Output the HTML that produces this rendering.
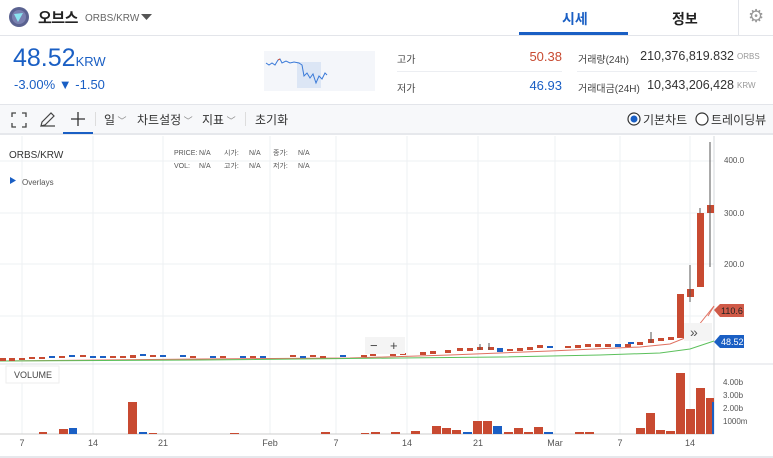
<!DOCTYPE html>
<html><head><meta charset="utf-8">
<style>
*{margin:0;padding:0;box-sizing:border-box}
body{width:773px;height:458px;overflow:hidden;background:#fff;font-family:"Liberation Sans","Noto Sans CJK KR",sans-serif;color:#333;position:relative}
.a{position:absolute;white-space:nowrap}
</style></head><body>
<div class="a" style="left:0;top:35px;width:773px;height:1px;background:#e3e5ea"></div>
<svg class="a" style="left:8px;top:6px" width="22" height="22"><circle cx="11" cy="11" r="10" fill="#5a6290"/><circle cx="11" cy="11" r="7" fill="#7a80b0"/><path d="M6 8 L15 7 L10 16 Z" fill="#8ae4f0"/></svg>
<div class="a" style="left:38px;top:7px;font-size:15px;letter-spacing:-0.5px;font-weight:bold;color:#222">오브스</div>
<div class="a" style="left:85px;top:13px;font-size:10px;color:#666">ORBS/KRW</div>
<svg class="a" style="left:141px;top:14px" width="12" height="8"><path d="M0 0H11L5.5 6Z" fill="#555"/></svg>
<div class="a" style="left:562px;top:9px;font-size:14px;font-weight:bold;color:#1a5fc4">시세</div>
<div class="a" style="left:519px;top:32px;width:109px;height:3px;background:#1a5fc4"></div>
<div class="a" style="left:672px;top:9px;font-size:14px;font-weight:bold;color:#222">정보</div>
<div class="a" style="left:738px;top:0;width:1px;height:35px;background:#e3e5ea"></div>
<div class="a" style="left:748px;top:6px;font-size:18px;color:#999">⚙</div>
<div class="a" style="left:13px;top:44px;font-size:25px;color:#1a5fc4">48.52<span style="font-size:13px">KRW</span></div>
<div class="a" style="left:14px;top:77px;font-size:13px;color:#1a5fc4">-3.00% ▼ -1.50</div>
<svg class="a" style="left:264px;top:51px" width="111" height="40"><rect width="111" height="40" fill="#f4f6fa"/><rect x="33" y="11" width="24" height="26" fill="#dce6f5"/><path d="M2 12 L5 14 L8 12 L11 14 L14 9 L16 8 L18 12 L22 10 L26 12 L30 11 L35 12 L38 14 L40 25 L43 22 L46 27 L49 23 L52 32 L55 25 L58 28 L61 22 L63 24" fill="none" stroke="#3a7ad8" stroke-width="1"/><path d="M14 9 L16 8" stroke="#d0503a"/></svg>
<div class="a" style="left:397px;top:51px;font-size:10px;color:#444">고가</div>
<div class="a" style="left:480px;top:49px;width:82px;text-align:right;font-size:13px;color:#c84a31">50.38</div>
<div class="a" style="left:397px;top:71px;width:165px;height:1px;background:#eceef2"></div>
<div class="a" style="left:397px;top:80px;font-size:10px;color:#444">저가</div>
<div class="a" style="left:480px;top:78px;width:82px;text-align:right;font-size:13px;color:#1a5fc4">46.93</div>
<div class="a" style="left:578px;top:51px;font-size:10px;color:#444">거래량(24h)</div>
<div class="a" style="left:600px;top:49px;width:134px;text-align:right;font-size:12.5px;color:#333">210,376,819.832</div>
<div class="a" style="left:737px;top:52px;font-size:8px;color:#999">ORBS</div>
<div class="a" style="left:577px;top:71px;width:180px;height:1px;background:#eceef2"></div>
<div class="a" style="left:578px;top:80px;font-size:10px;color:#444">거래대금(24H)</div>
<div class="a" style="left:600px;top:78px;width:134px;text-align:right;font-size:12.5px;color:#333">10,343,206,428</div>
<div class="a" style="left:737px;top:81px;font-size:8px;color:#999">KRW</div>
<div class="a" style="left:0;top:104px;width:773px;height:31px;background:#f7f8fa;border-top:1px solid #e3e5ea;border-bottom:2px solid #e6e8ec"></div>
<svg class="a" style="left:11px;top:112px" width="16" height="16" fill="none" stroke="#444" stroke-width="1.3"><path d="M1 5V1H5M11 1H15V5M15 11V15H11M5 15H1V11"/></svg>
<svg class="a" style="left:39px;top:111px" width="18" height="17" fill="none" stroke="#444" stroke-width="1.2"><path d="M2 15L3 11L12 2L15 5L6 14Z M2 15H16"/></svg>
<svg class="a" style="left:70px;top:111px" width="16" height="16" stroke="#333" stroke-width="1.3"><path d="M8 1V15M1 8H15"/></svg>
<div class="a" style="left:63px;top:132px;width:30px;height:2px;background:#1a5fc4"></div>
<div class="a" style="left:95px;top:112px;width:1px;height:14px;background:#ddd"></div>
<div class="a" style="left:104px;top:111px;font-size:12px;color:#333">일<span style="color:#888;font-size:9px"> ﹀</span></div>
<div class="a" style="left:137px;top:111px;font-size:12px;color:#333">차트설정<span style="color:#888;font-size:9px"> ﹀</span></div>
<div class="a" style="left:202px;top:111px;font-size:12px;color:#333">지표<span style="color:#888;font-size:9px"> ﹀</span></div>
<div class="a" style="left:245px;top:112px;width:1px;height:14px;background:#ddd"></div>
<div class="a" style="left:255px;top:111px;font-size:12px;color:#333">초기화</div>
<svg class="a" style="left:627px;top:112px" width="14" height="14"><circle cx="7" cy="7" r="6" fill="#fff" stroke="#333" stroke-width="1.2"/><circle cx="7" cy="7" r="3.5" fill="#1a5fc4"/></svg>
<div class="a" style="left:643px;top:111px;font-size:12px;color:#333">기본차트</div>
<svg class="a" style="left:695px;top:112px" width="14" height="14"><circle cx="7" cy="7" r="6" fill="#fff" stroke="#333" stroke-width="1.2"/></svg>
<div class="a" style="left:711px;top:111px;font-size:12px;color:#333">트레이딩뷰</div>
<svg class="a" style="left:0;top:136px" width="773" height="322">
<g stroke="#eef0f3" stroke-width="1">
<path d="M0 25H714M0 77H714M0 128H714M0 180H714"/>
<path d="M22 0V298M93 0V298M163 0V298M270 0V298M336 0V298M407 0V298M478 0V298M555 0V298M620 0V298M690 0V298"/>
</g>
<path d="M0 228H773" stroke="#dcdfe4"/>
<path d="M714 0V298" stroke="#d5d8dd"/>
<path d="M0 298H714" stroke="#ccc"/>
<path d="M0 321H773" stroke="#e6e8ec" stroke-width="2"/>
<path d="M0 225 L200 223 L350 222 L450 219 L550 215 L640 211 L670 208 L690 200 L714 170" fill="none" stroke="#e07060" stroke-width="1"/>
<path d="M0 225 L200 224 L400 222 L500 221 L600 219 L660 217 L690 213 L714 205" fill="none" stroke="#5cc05c" stroke-width="1"/>
<path fill="#c84a31" d="M0 222h6v3h-6zM9 222h6v3h-6zM19 222h6v2h-6zM29 221h6v2h-6zM39 221h6v2h-6zM59 220h6v2h-6zM80 219h6v2h-6zM110 220h6v2h-6zM120 220h6v2h-6zM130 219h6v3h-6zM150 219h6v2h-6zM190 220h6v2h-6zM220 220h6v2h-6zM250 220h6v2h-6zM290 219h6v2h-6zM310 219h6v2h-6zM320 220h6v2h-6zM361 219h6v2h-6zM370 218h6v2h-6zM390 218h6v2h-6zM400 217h6v2h-6zM420 216h6v3h-6zM430 215h6v3h-6zM445 214h6v3h-6zM457 212h6v3h-6zM467 212h6v3h-6zM477 211h6v3h-6zM488 211h6v3h-6zM507 213h6v2h-6zM517 212h6v3h-6zM527 211h6v3h-6zM537 209h6v3h-6zM565 210h6v2h-6zM575 209h6v3h-6zM585 208h6v3h-6zM595 208h6v3h-6zM605 208h6v3h-6zM625 208h6v3h-6zM637 206h6v3h-6zM648 203h6v4h-6zM658 202h6v3h-6zM668 201h6v3h-6zM677 158h7v44h-7zM687 153h7v8h-7zM697 77h7v74h-7zM707 69h7v8h-7z"/>
<path fill="#1a5fc4" d="M49 220h6v2h-6zM69 219h6v2h-6zM90 220h6v2h-6zM100 220h6v2h-6zM140 218h6v2h-6zM160 219h6v2h-6zM180 219h6v2h-6zM210 220h6v2h-6zM240 220h6v2h-6zM260 220h6v2h-6zM300 220h6v2h-6zM340 219h6v2h-6zM497 212h6v4h-6zM547 210h6v2h-6zM615 208h6v3h-6zM628 206h6v2h-6z"/>
<path stroke="#555" stroke-width="1" d="M480 208V214M489 207V214M651 196V207M690 129V166M700 72V77M710 6V131"/>
<path fill="#c84a31" d="M39 296h8v2h-8zM59 293h9v5h-9zM128 266h9v32h-9zM149 297h8v1h-8zM230 297h9v1h-9zM321 296h9v2h-9zM361 297h8v1h-8zM371 296h9v2h-9zM391 296h9v2h-9zM411 295h9v3h-9zM432 290h9v8h-9zM442 292h9v6h-9zM452 294h9v4h-9zM473 285h9v13h-9zM483 285h9v13h-9zM504 296h9v2h-9zM514 292h9v6h-9zM524 296h9v2h-9zM534 291h9v7h-9zM575 296h9v2h-9zM585 296h9v2h-9zM636 292h9v6h-9zM646 277h9v21h-9zM656 294h9v4h-9zM666 295h9v3h-9zM676 237h9v61h-9zM686 273h9v25h-9zM696 252h9v46h-9zM706 262h8v36h-8z"/>
<path fill="#1a5fc4" d="M69 292h8v6h-8zM139 296h8v2h-8zM463 296h9v2h-9zM493 290h9v8h-9zM544 296h9v2h-9zM712 266h2v32h-2z"/>
<g font-family="Liberation Sans,sans-serif" font-size="8" fill="#555">
<text x="724" y="27">400.0</text><text x="724" y="80">300.0</text><text x="724" y="131">200.0</text>
<text x="723" y="249">4.00b</text><text x="723" y="262">3.00b</text><text x="723" y="275">2.00b</text><text x="723" y="288">1000m</text>
</g>
<path d="M714 174 L720 168 H744 V181 H720Z" fill="#d05a48"/><text x="721" y="178" font-family="Liberation Sans,sans-serif" font-size="9" fill="#222">110.6</text>
<path d="M714 170 L708 180" stroke="#e07060"/>
<path d="M714 206 L720 199 H744 V212 H720Z" fill="#1a5fc4"/><text x="721" y="209" font-family="Liberation Sans,sans-serif" font-size="9" fill="#fff">48.52</text>
<rect x="684" y="187" width="28" height="18" fill="#f4f4f4"/><text x="690" y="201" font-family="Liberation Sans,sans-serif" font-size="14" fill="#555">»</text>
<rect x="365" y="201" width="40" height="17" fill="#f4f4f4"/><text x="370" y="214" font-family="Liberation Sans,sans-serif" font-size="13" fill="#444">−</text><text x="390" y="214" font-family="Liberation Sans,sans-serif" font-size="13" fill="#444">+</text>
<rect x="6" y="230" width="53" height="17" fill="#fff" stroke="#eee"/><text x="14" y="242" font-family="Liberation Sans,sans-serif" font-size="9" fill="#444">VOLUME</text>
<g font-family="Liberation Sans,sans-serif" font-size="9" fill="#555" text-anchor="middle">
<text x="22" y="310">7</text><text x="93" y="310">14</text><text x="163" y="310">21</text><text x="270" y="310">Feb</text><text x="336" y="310">7</text><text x="407" y="310">14</text><text x="478" y="310">21</text><text x="555" y="310">Mar</text><text x="620" y="310">7</text><text x="690" y="310">14</text>
</g>
<text x="9" y="22" font-family="Liberation Sans,sans-serif" font-size="10" fill="#333">ORBS/KRW</text>
<path d="M10 41L16 44.5L10 48Z" fill="#1a5fc4"/><text x="22" y="49" font-family="Liberation Sans,sans-serif" font-size="8" fill="#555">Overlays</text>
<g font-family="Liberation Sans,'Noto Sans CJK KR',sans-serif" font-size="7" fill="#555">
<text x="174" y="19">PRICE:</text><text x="199" y="19">N/A</text><text x="224" y="19">시가:</text><text x="249" y="19">N/A</text><text x="273" y="19">종가:</text><text x="298" y="19">N/A</text>
<text x="174" y="32">VOL:</text><text x="199" y="32">N/A</text><text x="224" y="32">고가:</text><text x="249" y="32">N/A</text><text x="273" y="32">저가:</text><text x="298" y="32">N/A</text>
</g>
</svg>
</body></html>
